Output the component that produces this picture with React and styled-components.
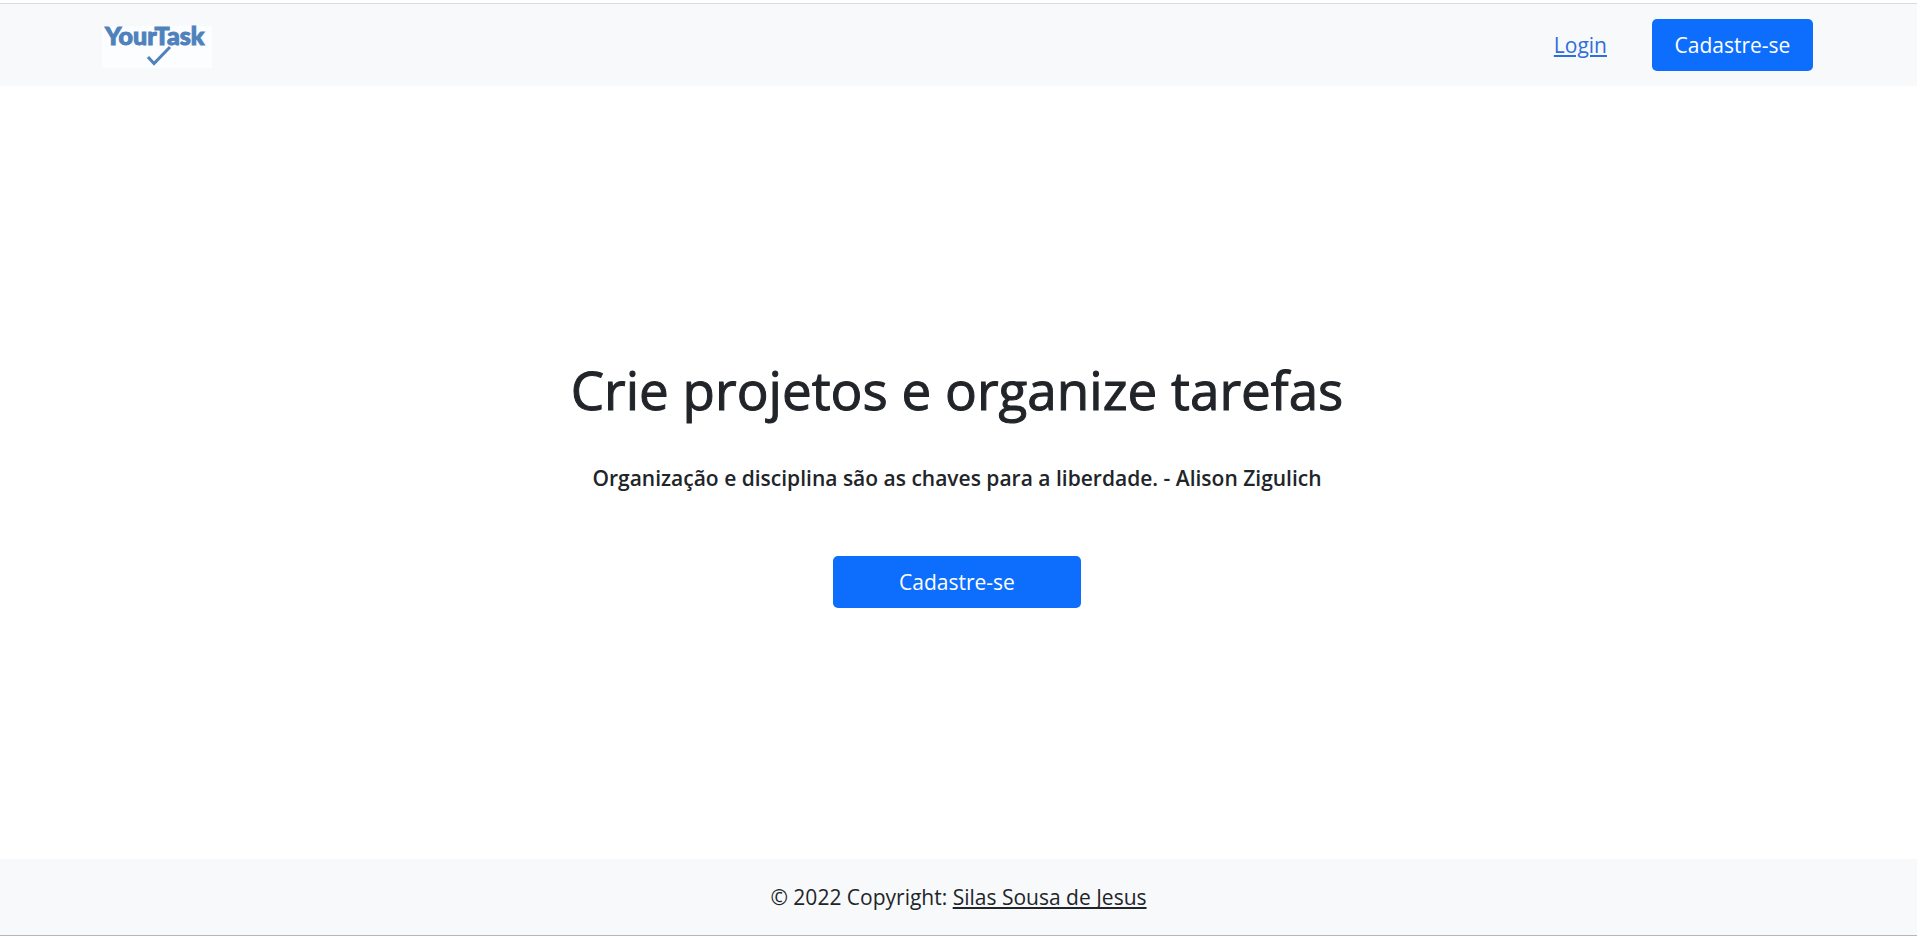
import React from "react";
import styled, { createGlobalStyle } from "styled-components";

const GlobalStyle = createGlobalStyle`
  *, *::before, *::after { box-sizing: border-box; }
  body {
    margin: 0;
    background: #fff;
    color: #212529;
    font-family: "Segoe UI", "Open Sans", "Noto Sans", sans-serif;
    font-size: 21px;
    line-height: 32px;
  }
`;

const Page = styled.div`
  min-height: 100vh;
  padding: 3px 0 1px;
  display: flex;
  flex-direction: column;
`;

const Header = styled.header`
  display: flex;
  align-items: center;
  justify-content: space-between;
  padding: 15px 104px 15px 102px;
  border-top: 1px solid #d9dbdd;
  background: #f8f9fb;
`;

const Brand = styled.a`
  display: block;
  width: 110px;
  height: 42px;
  margin-top: 4px;
  background: #fcfdfe;
  svg { display: block; overflow: visible; }
`;

const Nav = styled.nav`
  display: flex;
  align-items: center;
  gap: 45px;
`;

const LoginLink = styled.a`
  color: #2f6fdc;
  text-decoration: underline;
  text-decoration-thickness: 2px;
  text-underline-offset: 2px;
`;

const Button = styled.button`
  width: ${({ $wide }) => ($wide ? "248px" : "161px")};
  padding: 10px 0;
  border: 0;
  border-radius: 5px;
  background: #0d6efd;
  color: #fff;
  font: inherit;
  cursor: pointer;
`;

const Main = styled.main`
  flex: 1;
  padding: 18px 3px 0 0;
  display: flex;
  flex-direction: column;
  align-items: center;
  justify-content: center;
  text-align: center;
`;

const Title = styled.h1`
  margin: 0 0 38px;
  font-size: 53px;
  font-weight: 500;
  line-height: 68px;
  -webkit-text-stroke: 1px currentColor;
`;

const Quote = styled.p`
  margin: 0 0 62px;
  font-size: 21px;
  font-weight: 600;
`;

const Footer = styled.footer`
  padding: 22px 0;
  border-bottom: 1px solid #b4b8bb;
  background: #f8f9fb;
  text-align: center;
`;

const AuthorLink = styled.a`
  color: #212529;
  text-decoration: underline;
  text-decoration-thickness: 2px;
  text-underline-offset: 2px;
  text-decoration-skip-ink: none;
`;

function Logo() {
  return (
    <svg width="110" height="42" viewBox="0 0 110 42" role="img" aria-label="YourTask">
      <text
        x="3"
        y="19"
        fill="#4f81bd"
        stroke="#4f81bd"
        strokeWidth="1"
        fontFamily="Lato, sans-serif"
        fontWeight="900"
        fontSize="25"
      >
        YourTask
      </text>
      <path d="M46 31L52 37.500L68 21" fill="none" stroke="#4f81bd" strokeWidth="3" />
    </svg>
  );
}

export default function App() {
  return (
    <>
      <GlobalStyle />
      <Page>
        <Header>
          <Brand href="#"><Logo /></Brand>
          <Nav>
            <LoginLink href="#login">Login</LoginLink>
            <Button type="button">Cadastre-se</Button>
          </Nav>
        </Header>
        <Main>
          <Title>Crie projetos e organize tarefas</Title>
          <Quote>Organização e disciplina são as chaves para a liberdade. - Alison Zigulich</Quote>
          <Button type="button" $wide>Cadastre-se</Button>
        </Main>
        <Footer>
          © 2022 Copyright: <AuthorLink href="#author">Silas Sousa de Jesus</AuthorLink>
        </Footer>
      </Page>
    </>
  );
}
